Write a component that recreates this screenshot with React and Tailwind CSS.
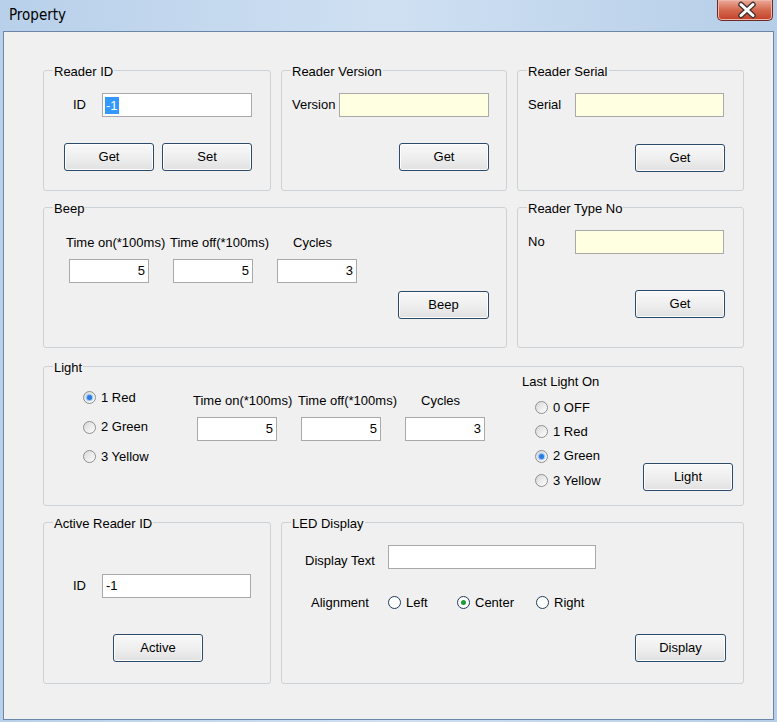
import React from "react";

// Win7 style "Property" dialog

const GroupBox = ({ title, className = "", children }) => (
  <div className={`relative rounded-[3px] border border-[#cdd2d6] ${className}`}>
    <span className="absolute left-[9px] top-[-7px] bg-[#f0f0f0] px-[1px] leading-[15px]">
      {title}
    </span>
    {children}
  </div>
);

const Btn = ({ children, className = "" }) => (
  <div
    className={`flex h-[28px] items-center justify-center rounded-[3px] border border-[#2c4a69] bg-linear-to-b from-[#f8f8f8] via-[#efefef] to-[#e1e1e1] shadow-[inset_0_0_0_1px_#fdfdfd] ${className}`}
  >
    {children}
  </div>
);

const Field = ({ className = "", children }) => (
  <div className={`flex h-[24px] items-center border border-[#a9a9a9] ${className}`}>
    {children}
  </div>
);

const NumField = ({ value }) => (
  <Field className="w-[80px] justify-end bg-white pr-[3px]">{value}</Field>
);

const Radio = ({ checked }) => (
  <span className="flex h-[13px] w-[13px] shrink-0 items-center justify-center rounded-full border border-[#8e8f8f] bg-linear-to-br from-[#d8d8d8] to-[#ffffff]">
    {checked && (
      <span className="h-[5px] w-[5px] rounded-full bg-[#2a7be0] shadow-[0_0_1px_1px_#8fc0f5]" />
    )}
  </span>
);

const LedRadio = ({ checked }) => (
  <span className="flex h-[13px] w-[13px] shrink-0 items-center justify-center rounded-full border-[1.5px] border-[#1d3b5d] bg-white">
    {checked && <span className="h-[5px] w-[5px] rounded-full bg-[#1f9a35]" />}
  </span>
);

const RadioRow = ({ label, checked }) => (
  <div className="flex h-[15px] items-center gap-[5px]">
    <Radio checked={checked} />
    <span>{label}</span>
  </div>
);

const CloseButton = () => (
  <div className="mr-[4px] h-[21px] w-[56px] overflow-hidden rounded-b-[5px] border border-t-0 border-[#6b2a22] bg-linear-to-b from-[#eaa999] via-[#d4694f] to-[#c23f28] shadow-[inset_0_0_0_1px_#efb7a9]">
    <svg width="56" height="21" viewBox="0 0 56 21">
      <path d="M23 4.5 L35 15.5 M35 4.5 L23 15.5" stroke="#3f3331" strokeWidth="5.5" strokeLinecap="round" />
      <path d="M23 4.5 L35 15.5 M35 4.5 L23 15.5" stroke="#ffffff" strokeWidth="3" strokeLinecap="round" />
    </svg>
  </div>
);

export default function App() {
  return (
    <div className="h-[722px] w-[777px] overflow-hidden bg-linear-to-r from-[#b8d0ea] via-[#cfe0f2] to-[#b6cee8] font-['Liberation_Sans',Arial,sans-serif] text-[13px] text-black">
      {/* Title bar */}
      <div className="flex h-[31px] items-start justify-between">
        <span className="ml-[9px] mt-[6px] font-['Liberation_Sans_Narrow','DejaVu_Sans_Condensed',Roboto,sans-serif] text-[15px] leading-[18px]">
          Property
        </span>
        <CloseButton />
      </div>

      {/* Client area */}
      <div className="mx-[3px] h-[689px] border border-[#6b86a6] bg-[#f0f0f0] pl-[39px] pt-[38px]">
        {/* Row 1 */}
        <div className="flex gap-[10px]">
          <GroupBox title="Reader ID" className="h-[121px] w-[228px]">
            <div className="ml-[29px] mt-[22px] flex items-center">
              <span className="w-[29px]">ID</span>
              <Field className="w-[150px] bg-white pl-[2px]">
                <span className="bg-[#3399ff] px-[1px] leading-[17px] text-white">-1</span>
              </Field>
            </div>
            <div className="ml-[20px] mt-[26px] flex gap-[8px]">
              <Btn className="w-[90px]">Get</Btn>
              <Btn className="w-[90px]">Set</Btn>
            </div>
          </GroupBox>

          <GroupBox title="Reader Version" className="h-[121px] w-[226px]">
            <div className="ml-[10px] mt-[22px] flex items-center">
              <span className="w-[47px]">Version</span>
              <Field className="w-[150px] bg-[#ffffe1]" />
            </div>
            <Btn className="ml-[117px] mt-[26px] w-[90px]">Get</Btn>
          </GroupBox>

          <GroupBox title="Reader Serial" className="h-[121px] w-[227px]">
            <div className="ml-[10px] mt-[22px] flex items-center">
              <span className="w-[47px]">Serial</span>
              <Field className="w-[149px] bg-[#ffffe1]" />
            </div>
            <Btn className="ml-[117px] mt-[27px] w-[90px]">Get</Btn>
          </GroupBox>
        </div>

        {/* Row 2 */}
        <div className="mt-[16px] flex gap-[10px]">
          <GroupBox title="Beep" className="h-[141px] w-[464px]">
            <div className="ml-[22px] mt-[27px] flex leading-[15px]">
              <span className="w-[104px]">Time on(*100ms)</span>
              <span className="w-[123px]">Time off(*100ms)</span>
              <span>Cycles</span>
            </div>
            <div className="ml-[25px] mt-[9px] flex gap-[24px]">
              <NumField value="5" />
              <NumField value="5" />
              <NumField value="3" />
            </div>
            <Btn className="ml-[354px] mt-[8px] w-[91px]">Beep</Btn>
          </GroupBox>

          <GroupBox title="Reader Type No" className="h-[141px] w-[227px]">
            <div className="ml-[10px] mt-[22px] flex items-center">
              <span className="w-[47px]">No</span>
              <Field className="w-[149px] bg-[#ffffe1]" />
            </div>
            <Btn className="ml-[117px] mt-[36px] w-[90px]">Get</Btn>
          </GroupBox>
        </div>

        {/* Row 3 */}
        <GroupBox title="Light" className="mt-[18px] h-[140px] w-[701px]">
          <div className="flex items-start">
            <div className="ml-[39px] mt-[23px] flex w-[110px] flex-col gap-[14.5px]">
              <RadioRow label="1 Red" checked />
              <RadioRow label="2 Green" />
              <RadioRow label="3 Yellow" />
            </div>
            <div className="mt-[25.5px] w-[329px]">
              <div className="flex leading-[15px]">
                <span className="w-[105px]">Time on(*100ms)</span>
                <span className="w-[123px]">Time off(*100ms)</span>
                <span>Cycles</span>
              </div>
              <div className="ml-[4px] mt-[9.5px] flex gap-[24px]">
                <NumField value="5" />
                <NumField value="5" />
                <NumField value="3" />
              </div>
            </div>
            <div className="mt-[7px] w-[121px]">
              <div className="leading-[15px]">Last Light On</div>
              <div className="ml-[13px] mt-[11px] flex flex-col gap-[9.3px]">
                <RadioRow label="0 OFF" />
                <RadioRow label="1 Red" />
                <RadioRow label="2 Green" checked />
                <RadioRow label="3 Yellow" />
              </div>
            </div>
            <Btn className="mt-[96px] w-[90px]">Light</Btn>
          </div>
        </GroupBox>

        {/* Row 4 */}
        <div className="mt-[16px] flex gap-[10px]">
          <GroupBox title="Active Reader ID" className="h-[162px] w-[228px]">
            <div className="ml-[29px] mt-[51px] flex items-center">
              <span className="w-[29px]">ID</span>
              <Field className="w-[149px] bg-white pl-[3px]">-1</Field>
            </div>
            <Btn className="ml-[69px] mt-[36px] w-[90px]">Active</Btn>
          </GroupBox>

          <GroupBox title="LED Display" className="h-[162px] w-[463px]">
            <div className="ml-[23px] mt-[22px] flex h-[24px] items-center">
              <span className="mt-[6px] w-[83px] leading-[15px]">Display Text</span>
              <Field className="w-[208px] bg-white" />
            </div>
            <div className="ml-[29px] mt-[26px] flex h-[15px] items-center">
              <span className="w-[77px]">Alignment</span>
              <div className="flex w-[69px] items-center gap-[5px]">
                <LedRadio />
                <span>Left</span>
              </div>
              <div className="flex w-[79px] items-center gap-[5px]">
                <LedRadio checked />
                <span>Center</span>
              </div>
              <div className="flex items-center gap-[5px]">
                <LedRadio />
                <span>Right</span>
              </div>
            </div>
            <Btn className="ml-[353px] mt-[24px] w-[91px]">Display</Btn>
          </GroupBox>
        </div>
      </div>
    </div>
  );
}
